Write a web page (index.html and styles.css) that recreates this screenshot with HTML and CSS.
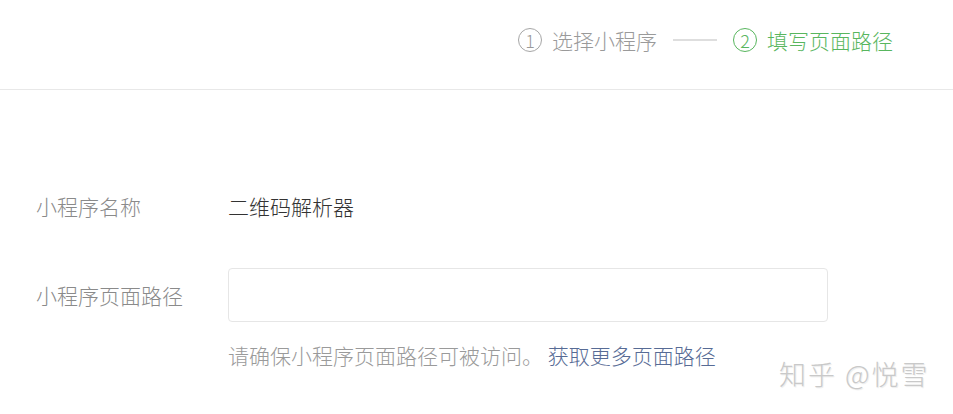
FILE: index.html
```html
<!DOCTYPE html>
<html lang="zh-CN">

<head>
    <meta charset="UTF-8">
    <meta name="viewport" content="width=device-width, initial-scale=1.0">
    <title>填写页面路径</title>
    <link rel="stylesheet" href="styles.css">
</head>

<body>
    <div class="header">
        <div class="steps">
            <div class="step">
                <span class="num">1</span>
                <span>选择小程序</span>
            </div>
            <span class="sep"></span>
            <div class="step active">
                <span class="num">2</span>
                <span>填写页面路径</span>
            </div>
        </div>
    </div>
    <div class="form">
        <div class="row">
            <span class="label">小程序名称</span>
            <span class="value">二维码解析器</span>
        </div>
        <div class="row">
            <span class="label">小程序页面路径</span>
            <input type="text" class="path">
        </div>
        <p class="tip">请确保小程序页面路径可被访问。 <a href="javascript:;">获取更多页面路径</a></p>
    </div>
    <div class="mark">知乎 @悦雪</div>
</body>

</html>
```

FILE: styles.css
```css
body {
    margin: 0;
    font-family: "Noto Sans CJK SC", "Noto Sans", sans-serif;
    font-size: 21px;
    font-weight: 300;
    color: #333;
    background: #fff;
    position: relative;
    height: 414px;
    overflow: hidden;
}

.header {
    height: 89px;
    border-bottom: 1px solid #e8e8e8;
    display: flex;
    justify-content: flex-end;
    align-items: center;
    padding-right: 60px;
}

.steps {
    display: flex;
    align-items: center;
    gap: 16px;
    margin-top: -10px;
}

.step {
    display: flex;
    align-items: center;
    gap: 10px;
    color: #9a9a9a;
}

.num {
    width: 22px;
    height: 22px;
    border: 1.5px solid #a6a6a6;
    border-radius: 50%;
    display: flex;
    justify-content: center;
    align-items: center;
    font-size: 18px;
    line-height: 1;
}

.active {
    color: #58b65e;
}

.active .num {
    border-color: #58b65e;
}

.sep {
    width: 44px;
    height: 2px;
    background: #dedede;
}

.form {
    padding: 89px 0 0 36px;
}

.row {
    display: flex;
    align-items: center;
    height: 54px;
    margin-bottom: 35px;
}

.label {
    width: 192px;
    color: #8a8a8a;
}

.value {
    color: #333;
}

.path {
    width: 598px;
    height: 52px;
    padding: 0;
    border: 1px solid #e6e6e6;
    border-radius: 4px;
    outline: none;
    box-sizing: content-box;
}

.tip {
    margin: -17px 0 0 192px;
    line-height: 30px;
    color: #9a9a9a;
}

.tip a {
    color: #576b95;
    text-decoration: none;
}

.mark {
    position: absolute;
    left: 779px;
    top: 354px;
    font-size: 27px;
    letter-spacing: 2px;
    color: #c9c9c9;
    text-shadow: 1px 1px 1px rgba(0, 0, 0, 0.08);
}
```
